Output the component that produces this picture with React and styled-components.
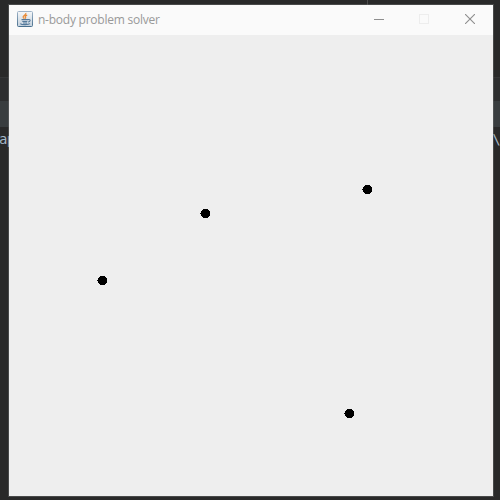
import React from 'react';
import styled, { createGlobalStyle } from 'styled-components';

const GlobalStyle = createGlobalStyle`
  body { margin: 0; overflow: hidden; background: #2b2b2b; }
  * { box-sizing: border-box; }
`;

const Desktop = styled.div`
  position: relative;
  width: 500px;
  height: 500px;
  overflow: hidden;
  background: #292929;
`;

const Editor = styled.div`
  display: grid;
  grid-template-rows: 77px 24px 26px 1fr;
  height: 100%;
`;

const EditorBand = styled.div`
  background: ${(p) => p.$color};
  border-top: ${(p) => (p.$line ? `1px solid ${p.$line}` : 'none')};
`;

const TopBand = styled(EditorBand)`
  padding-left: 367px;
`;

const Divider = styled.div`
  width: 1px;
  height: 5px;
  background: #4b4b4b;
`;

const Console = styled.div`
  display: flex;
  justify-content: space-between;
  padding-top: 4px;
  background: #292929;
  color: #a3b7c6;
  font: 14px/16px 'DejaVu Sans Mono', monospace;
`;

const ConsoleText = styled.span`
  white-space: nowrap;
  margin-left: ${(p) => p.$shift || 0}px;
  letter-spacing: -0.8px;
`;

const Window = styled.section`
  position: absolute;
  left: 9px;
  top: 5px;
  width: 484px;
  height: 491px;
  display: flex;
  flex-direction: column;
  background: #eeeeee;
  box-shadow: 0 0 0 1px rgba(110, 112, 114, 0.45);
`;

const TitleBar = styled.header`
  display: flex;
  align-items: center;
  height: 30px;
  flex: none;
  padding: 0 0 2px 8px;
  background: #fafafa;
`;

const Title = styled.h1`
  flex: 1;
  margin: 2px 0 0 5px;
  color: #999999;
  font: 400 12px/16px 'Open Sans', 'Noto Sans', sans-serif;
  white-space: nowrap;
`;

const TitleText = styled.span`
  letter-spacing: -0.24px;
`;

const WindowButton = styled.button`
  display: flex;
  align-items: center;
  justify-content: center;
  width: ${(p) => p.$width || 46}px;
  height: 28px;
  padding: 0;
  border: 0;
  background: transparent;
  color: ${(p) => (p.disabled ? '#ededed' : '#8e8e8e')};
`;

const Space = styled.svg`
  display: block;
  width: 484px;
  height: 461px;
`;

const JavaIcon = () => (
  <svg width="16" height="16" viewBox="0 0 16 16" aria-hidden="true">
    <defs>
      <linearGradient id="tile" x1="0" y1="0" x2="0" y2="1">
        <stop offset="0" stopColor="#f5f7f9" />
        <stop offset="1" stopColor="#c4d1dd" />
      </linearGradient>
      <linearGradient id="edge" x1="0" y1="0" x2="0" y2="1">
        <stop offset="0" stopColor="#a0b4c8" />
        <stop offset="1" stopColor="#49708f" />
      </linearGradient>
    </defs>
    <rect x="0.5" y="0.5" width="15" height="15" rx="1" fill="url(#tile)" stroke="url(#edge)" />
    <path d="M8.8 2C9.6 4 5.4 4.5 6.2 6.3L7.2 7.7M10.2 4.1C8.2 4.7 7.7 5.4 8.6 6.4L8.2 7.7" fill="none" stroke="#e98b37" strokeWidth="1.3" />
    <path d="M4.5 8.6H11M5.3 10.5H10.3M6 12H10M11 8.6C14.1 7.8 13.6 10.9 11 11M3.3 12.6C4.5 14 11.5 14 13 12.7" fill="none" stroke="#54799b" strokeWidth="1.1" />
  </svg>
);

const bodies = [
  { x: 196, y: 178 },
  { x: 358, y: 154 },
  { x: 93, y: 245 },
  { x: 340, y: 378 },
];

const Body = ({ x, y }) => (
  <path
    transform={`translate(${x} ${y})`}
    d="M-2-4H3V-3H4V-2H5V3H4V4H3V5H-2V4H-3V3H-4V1H-5V0H-4V-2H-3V-3H-2Z"
    fill="#000"
    shapeRendering="crispEdges"
  />
);

export default function App() {
  return (
    <>
      <GlobalStyle />
      <Desktop>
        <Editor>
          <TopBand $color="#292929"><Divider /></TopBand>
          <EditorBand $color="#2d2e2f" $line="#353637" />
          <EditorBand $color="#393d3f" />
          <Console>
            <ConsoleText $shift={-1}>ap</ConsoleText>
            <ConsoleText>:\</ConsoleText>
          </Console>
        </Editor>
        <Window>
          <TitleBar>
            <JavaIcon />
            <Title><TitleText>n-body problem solver</TitleText></Title>
            <WindowButton $width={45} aria-label="Minimize">
              <svg width="10" height="10"><path d="M0 5.5H10" stroke="currentColor" /></svg>
            </WindowButton>
            <WindowButton aria-label="Maximize" $width={46} disabled>
              <svg width="10" height="10"><rect x="0.5" y="0.5" width="9" height="9" fill="none" stroke="currentColor" /></svg>
            </WindowButton>
            <WindowButton aria-label="Close">
              <svg width="10" height="10"><path d="M0 0L10 10M10 0L0 10" stroke="currentColor" strokeWidth="1.1" /></svg>
            </WindowButton>
          </TitleBar>
          <Space viewBox="0 0 484 461" role="img" aria-label="Bodies">
            {bodies.map((b) => <Body key={`${b.x}-${b.y}`} {...b} />)}
          </Space>
        </Window>
      </Desktop>
    </>
  );
}
